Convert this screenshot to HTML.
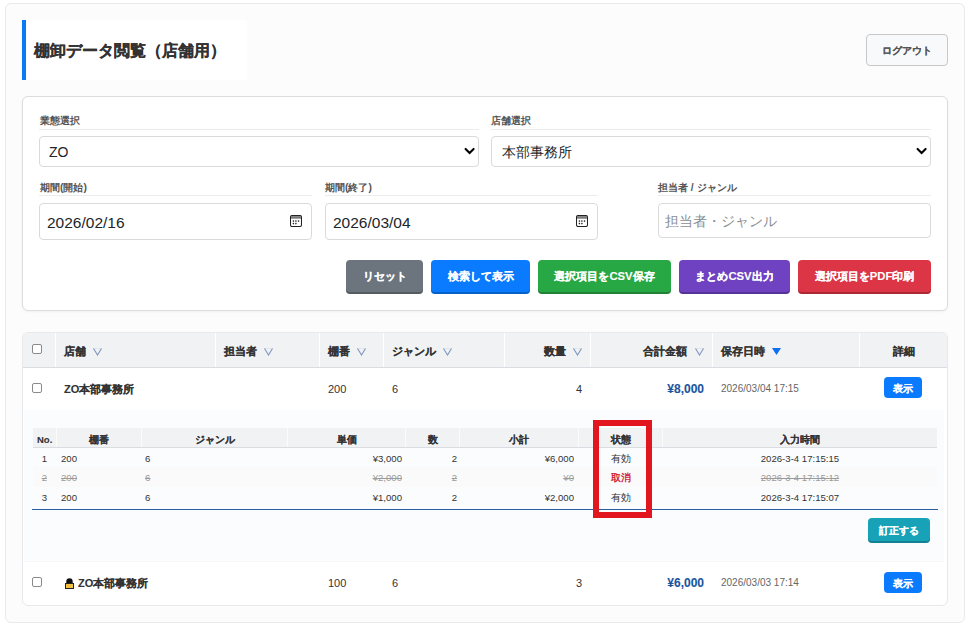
<!DOCTYPE html>
<html lang="ja">
<head>
<meta charset="utf-8">
<style>
*{box-sizing:border-box;margin:0;padding:0}
html,body{width:968px;height:626px;overflow:hidden;background:#fff}
body{position:relative;font-family:"Liberation Sans",sans-serif;color:#333}
.a{position:absolute;white-space:nowrap}
.r{text-align:right}
.c{text-align:center}
.b{font-weight:bold;-webkit-text-stroke:0.1px currentColor}
.b0{font-weight:bold}
.outer{left:5px;top:3px;width:960px;height:620px;border:1px solid #eaeaea;border-radius:6px;background:#fcfcfc}
.title{left:22px;top:20px;width:225px;height:60px;background:#fff;border-left:4px solid #0b7af5}
.ttl{left:34px;top:41px;font-size:16px;line-height:20px;font-weight:bold;color:#333;-webkit-text-stroke:0.2px #333}
.logout{left:866px;top:34px;width:82px;height:32px;border:1px solid #c8c8c8;border-radius:4px;background:#f8f9fa;font-size:10px;line-height:31px;color:#555;text-align:center}
.panel{left:22px;top:96px;width:926px;height:215px;border:1px solid #dcdcdc;border-radius:6px;background:#fff;box-shadow:0 1px 3px rgba(0,0,0,.05)}
.lbl{font-size:10.3px;line-height:14px;color:#555}
.uline{height:1px;background:#ececec}
.inp{border:1px solid #d9dadc;border-radius:4px;background:#fff}
.itx{font-size:14px;line-height:18px;color:#212529}
.btn{top:260px;height:34px;border-radius:4px;color:#fff;font-size:11.3px;line-height:33px;text-align:center;box-shadow:inset 0 -2px 0 rgba(0,0,0,.22)}
.tbl{left:22px;top:332px;width:926px;height:274px;border:1px solid #e8e9ec;border-radius:6px;background:#fff;overflow:hidden}
.thead{left:23px;top:333px;width:924px;height:35px;background:#f1f2f4;border-bottom:1px solid #d9dce1}
.sep{top:333px;width:1px;height:34px;background:#fff}
.th{font-size:11.3px;line-height:14px;color:#333;top:344px}
.cb{width:10px;height:10px;border:1px solid #8a8a8a;border-radius:2px;background:#fff}
.td{font-size:11px;line-height:14px;color:#333}
.detail{left:24px;top:410px;width:920px;height:151px;background:#fbfcfe}
.ihead{left:33px;top:428px;width:904px;height:20px;background:#f1f2f4;border-bottom:1px solid #d9dce1}
.isep{top:428px;width:1px;height:19px;background:#fbfbfc}
.ih{font-size:9.5px;line-height:12px;color:#333;top:434px}
.it{font-size:9.6px;line-height:12px;color:#333}
.cx{color:#9a9a9a;text-decoration:line-through}
.show{width:38px;height:21px;border-radius:4px;background:#0a7bff;color:#fff;font-size:10px;line-height:21px;padding-top:1px;text-align:center}
</style>
</head>
<body>
<div class="a outer"></div>

<div class="a title"></div>
<div class="a ttl">棚卸データ閲覧（店舗用）</div>
<div class="a logout b">ログアウト</div>

<!-- filter panel -->
<div class="a panel"></div>
<div class="a lbl b0" style="left:40px;top:114px">業態選択</div>
<div class="a uline" style="left:39px;top:129px;width:440px"></div>
<div class="a inp" style="left:39px;top:136px;width:440px;height:31px"></div>
<div class="a itx" style="left:49px;top:143px">ZO</div>
<svg class="a" style="left:463px;top:144px" width="14" height="14" viewBox="0 0 14 14"><path d="M2.6 4.9 L6.6 8.9 L10.6 4.9" fill="none" stroke="#000" stroke-width="2.1" stroke-linecap="round"/></svg>

<div class="a lbl b0" style="left:491px;top:114px">店舗選択</div>
<div class="a uline" style="left:491px;top:129px;width:440px"></div>
<div class="a inp" style="left:491px;top:136px;width:440px;height:31px"></div>
<div class="a itx" style="left:502px;top:143px">本部事務所</div>
<svg class="a" style="left:915px;top:144px" width="14" height="14" viewBox="0 0 14 14"><path d="M2.6 4.9 L6.6 8.9 L10.6 4.9" fill="none" stroke="#000" stroke-width="2.1" stroke-linecap="round"/></svg>

<div class="a lbl b0" style="left:40px;top:181px">期間(開始)</div>
<div class="a uline" style="left:39px;top:195px;width:273px"></div>
<div class="a inp" style="left:39px;top:203px;width:273px;height:37px"></div>
<div class="a itx" style="left:47px;top:214px;font-size:15.5px">2026/02/16</div>
<svg class="a" style="left:290px;top:215px" width="12" height="12" viewBox="0 0 12 12"><rect x="0.5" y="0.5" width="11" height="11" rx="1.6" fill="none" stroke="#222" stroke-width="1.05"/><rect x="1" y="1.1" width="10" height="2.6" fill="#7a7a7a"/><g fill="#222"><circle cx="3.4" cy="6.1" r="0.8"/><circle cx="5.9" cy="6.1" r="0.8"/><circle cx="8.5" cy="6.1" r="0.8"/><circle cx="3.4" cy="8.6" r="0.8"/><circle cx="5.9" cy="8.6" r="0.8"/></g></svg>

<div class="a lbl b0" style="left:325px;top:181px">期間(終了)</div>
<div class="a uline" style="left:325px;top:195px;width:273px"></div>
<div class="a inp" style="left:325px;top:203px;width:273px;height:37px"></div>
<div class="a itx" style="left:333px;top:214px;font-size:15.5px">2026/03/04</div>
<svg class="a" style="left:576px;top:215px" width="12" height="12" viewBox="0 0 12 12"><rect x="0.5" y="0.5" width="11" height="11" rx="1.6" fill="none" stroke="#222" stroke-width="1.05"/><rect x="1" y="1.1" width="10" height="2.6" fill="#7a7a7a"/><g fill="#222"><circle cx="3.4" cy="6.1" r="0.8"/><circle cx="5.9" cy="6.1" r="0.8"/><circle cx="8.5" cy="6.1" r="0.8"/><circle cx="3.4" cy="8.6" r="0.8"/><circle cx="5.9" cy="8.6" r="0.8"/></g></svg>

<div class="a lbl b0" style="left:658px;top:181px">担当者 / ジャンル</div>
<div class="a uline" style="left:658px;top:195px;width:273px"></div>
<div class="a inp" style="left:658px;top:203px;width:273px;height:35px"></div>
<div class="a itx" style="left:665px;top:212px;color:#8a8f94">担当者・ジャンル</div>

<div class="a btn b" style="left:346px;width:77px;background:#6c757d">リセット</div>
<div class="a btn b" style="left:431px;width:99px;background:#0a7bff">検索して表示</div>
<div class="a btn b" style="left:538px;width:133px;background:#28a745">選択項目をCSV保存</div>
<div class="a btn b" style="left:679px;width:111px;background:#6f42c1">まとめCSV出力</div>
<div class="a btn b" style="left:798px;width:133px;background:#dc3545">選択項目をPDF印刷</div>

<!-- table -->
<div class="a tbl"></div>
<div class="a thead"></div>
<div class="a sep" style="left:55px"></div>
<div class="a sep" style="left:215px"></div>
<div class="a sep" style="left:319px"></div>
<div class="a sep" style="left:383px"></div>
<div class="a sep" style="left:504px"></div>
<div class="a sep" style="left:590px"></div>
<div class="a sep" style="left:712px"></div>
<div class="a sep" style="left:859px"></div>
<div class="a cb" style="left:32px;top:344px"></div>
<div class="a th b" style="left:64px">店舗</div>
<div class="a th b" style="left:224px">担当者</div>
<div class="a th b" style="left:328px">棚番</div>
<div class="a th b" style="left:392px">ジャンル</div>
<div class="a th b" style="left:544px">数量</div>
<div class="a th b" style="left:643px">合計金額</div>
<div class="a th b" style="left:721px">保存日時</div>
<div class="a th b" style="left:893px">詳細</div>
<svg class="a" style="left:92px;top:347px" width="11" height="9" viewBox="0 0 11 9"><path d="M1.5 1.5 H9.5" stroke="#d9e1ee" stroke-width="0.8"/><path d="M1.5 1.5 L5.5 8 L9.5 1.5" fill="none" stroke="#7f95bd" stroke-width="1.1"/></svg>
<svg class="a" style="left:263px;top:347px" width="11" height="9" viewBox="0 0 11 9"><path d="M1.5 1.5 H9.5" stroke="#d9e1ee" stroke-width="0.8"/><path d="M1.5 1.5 L5.5 8 L9.5 1.5" fill="none" stroke="#7f95bd" stroke-width="1.1"/></svg>
<svg class="a" style="left:356px;top:347px" width="11" height="9" viewBox="0 0 11 9"><path d="M1.5 1.5 H9.5" stroke="#d9e1ee" stroke-width="0.8"/><path d="M1.5 1.5 L5.5 8 L9.5 1.5" fill="none" stroke="#7f95bd" stroke-width="1.1"/></svg>
<svg class="a" style="left:442px;top:347px" width="11" height="9" viewBox="0 0 11 9"><path d="M1.5 1.5 H9.5" stroke="#d9e1ee" stroke-width="0.8"/><path d="M1.5 1.5 L5.5 8 L9.5 1.5" fill="none" stroke="#7f95bd" stroke-width="1.1"/></svg>
<svg class="a" style="left:572px;top:347px" width="11" height="9" viewBox="0 0 11 9"><path d="M1.5 1.5 H9.5" stroke="#d9e1ee" stroke-width="0.8"/><path d="M1.5 1.5 L5.5 8 L9.5 1.5" fill="none" stroke="#7f95bd" stroke-width="1.1"/></svg>
<svg class="a" style="left:694px;top:347px" width="11" height="9" viewBox="0 0 11 9"><path d="M1.5 1.5 H9.5" stroke="#d9e1ee" stroke-width="0.8"/><path d="M1.5 1.5 L5.5 8 L9.5 1.5" fill="none" stroke="#7f95bd" stroke-width="1.1"/></svg>
<svg class="a" style="left:771px;top:347px" width="11" height="9" viewBox="0 0 11 9"><path d="M1 1 H10 L5.5 8 Z" fill="#0a6ff0"/></svg>

<!-- row 1 -->
<div class="a cb" style="left:32px;top:383px"></div>
<div class="a td b" style="left:64px;top:382px">ZO本部事務所</div>
<div class="a td" style="left:328px;top:382px">200</div>
<div class="a td" style="left:392px;top:382px">6</div>
<div class="a td r" style="left:540px;width:42px;top:382px">4</div>
<div class="a td r b" style="left:640px;width:64px;top:382px;color:#1a55a0;font-size:12px">¥8,000</div>
<div class="a td" style="left:721px;top:382px;font-size:10px;color:#666">2026/03/04 17:15</div>
<div class="a show b" style="left:884px;top:377px">表示</div>

<!-- detail -->
<div class="a detail"></div>
<div class="a ihead"></div>
<div class="a isep" style="left:56px"></div>
<div class="a isep" style="left:141px"></div>
<div class="a isep" style="left:287px"></div>
<div class="a isep" style="left:405px"></div>
<div class="a isep" style="left:459px"></div>
<div class="a isep" style="left:578px"></div>
<div class="a isep" style="left:662px"></div>
<div class="a ih b" style="left:37px">No.</div>
<div class="a ih b c" style="left:57px;width:84px">棚番</div>
<div class="a ih b c" style="left:142px;width:145px">ジャンル</div>
<div class="a ih b c" style="left:288px;width:117px">単価</div>
<div class="a ih b c" style="left:406px;width:53px">数</div>
<div class="a ih b c" style="left:460px;width:118px">小計</div>
<div class="a ih b c" style="left:579px;width:83px">状態</div>
<div class="a ih b c" style="left:663px;width:274px">入力時間</div>

<div class="a" style="left:33px;top:448px;width:904px;height:19px;background:#fbfcfd"></div>
<div class="a" style="left:33px;top:467px;width:904px;height:20px;background:#fafafa"></div>
<div class="a" style="left:33px;top:487px;width:904px;height:22px;background:#fbfcfd"></div>
<div class="a" style="left:32px;top:509px;width:906px;height:1px;background:#2a5f9c"></div>

<div class="a it r" style="left:30px;width:17px;top:452.5px">1</div>
<div class="a it" style="left:61px;top:452.5px">200</div>
<div class="a it" style="left:145px;top:452.5px">6</div>
<div class="a it r" style="left:340px;width:62px;top:452.5px">¥3,000</div>
<div class="a it r" style="left:430px;width:27px;top:452.5px">2</div>
<div class="a it r" style="left:510px;width:64px;top:452.5px">¥6,000</div>
<div class="a it c" style="left:579px;width:83px;top:452.5px">有効</div>
<div class="a it c" style="left:663px;width:274px;top:452.5px">2026-3-4 17:15:15</div>

<div class="a it r cx" style="left:30px;width:17px;top:471.5px">2</div>
<div class="a it cx" style="left:61px;top:471.5px">200</div>
<div class="a it cx" style="left:145px;top:471.5px">6</div>
<div class="a it r cx" style="left:340px;width:62px;top:471.5px">¥2,000</div>
<div class="a it r cx" style="left:430px;width:27px;top:471.5px">2</div>
<div class="a it r cx" style="left:510px;width:64px;top:471.5px">¥0</div>
<div class="a it c" style="left:579px;width:83px;top:471.5px;color:#d0283a;font-weight:bold">取消</div>
<div class="a it c cx" style="left:663px;width:274px;top:471.5px">2026-3-4 17:15:12</div>

<div class="a it r" style="left:30px;width:17px;top:491.5px">3</div>
<div class="a it" style="left:61px;top:491.5px">200</div>
<div class="a it" style="left:145px;top:491.5px">6</div>
<div class="a it r" style="left:340px;width:62px;top:491.5px">¥1,000</div>
<div class="a it r" style="left:430px;width:27px;top:491.5px">2</div>
<div class="a it r" style="left:510px;width:64px;top:491.5px">¥2,000</div>
<div class="a it c" style="left:579px;width:83px;top:491.5px">有効</div>
<div class="a it c" style="left:663px;width:274px;top:491.5px">2026-3-4 17:15:07</div>

<div class="a b" style="left:868px;top:518px;width:62px;height:25px;border-radius:4px;background:#17a2b8;color:#fff;font-size:10.3px;line-height:26.5px;text-align:center;box-shadow:inset 0 -2px 0 rgba(0,0,0,.2)">訂正する</div>

<!-- row 2 -->
<div class="a" style="left:24px;top:561px;width:920px;height:1px;background:#f6f7f9"></div>
<div class="a cb" style="left:32px;top:577px"></div>
<svg class="a" style="left:65px;top:578px" width="9" height="11" viewBox="0 0 9 11"><path d="M1.3 5.6 V3.6 A3.2 3.3 0 0 1 7.7 3.6 V5.6 Z" fill="#111"/><rect x="0.5" y="5.5" width="8" height="5" fill="#f4c142" stroke="#222" stroke-width="1"/></svg>
<div class="a td b" style="left:78px;top:576px">ZO本部事務所</div>
<div class="a td" style="left:328px;top:576px">100</div>
<div class="a td" style="left:392px;top:576px">6</div>
<div class="a td r" style="left:540px;width:42px;top:576px">3</div>
<div class="a td r b" style="left:640px;width:64px;top:576px;color:#1a55a0;font-size:12px">¥6,000</div>
<div class="a td" style="left:721px;top:576px;font-size:10px;color:#666">2026/03/03 17:14</div>
<div class="a show b" style="left:884px;top:572px">表示</div>

<!-- red annotation box -->
<div class="a" style="left:592.5px;top:419.5px;width:59px;height:98px;border:6px solid #e2161f"></div>
</body>
</html>
